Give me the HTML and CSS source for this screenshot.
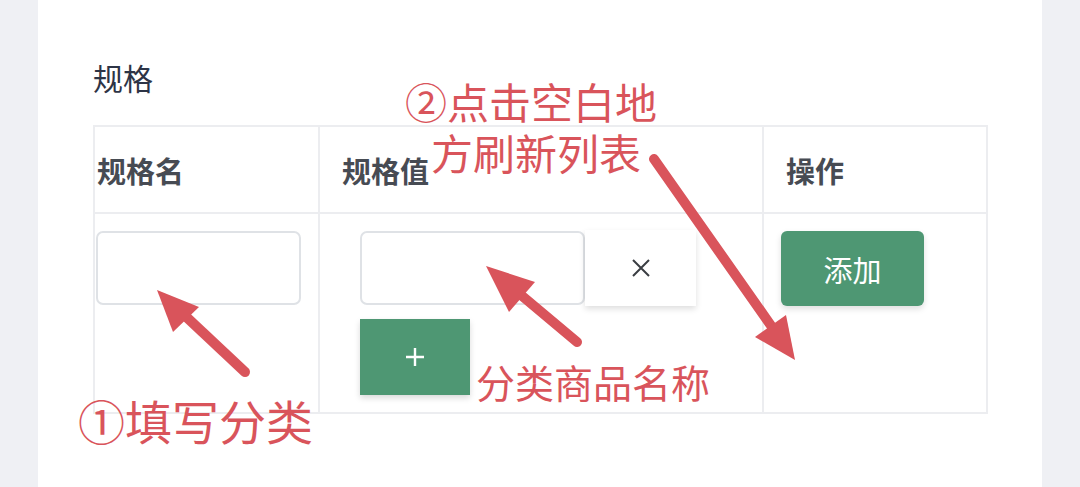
FILE: index.html
```html
<!DOCTYPE html>
<html lang="zh-CN">
<head>
    <meta charset="UTF-8">
    <meta name="viewport" content="width=device-width, initial-scale=1.0">
    <title>规格</title>
    <link rel="stylesheet" href="styles.css">
</head>
<body>
    <div class="page">
        <div class="card">
            <div class="title">规格</div>
            <table class="spec-table">
                <colgroup>
                    <col class="col-name">
                    <col class="col-value">
                    <col class="col-op">
                </colgroup>
                <thead>
                    <tr>
                        <th class="th-name">规格名</th>
                        <th class="th-value">规格值</th>
                        <th class="th-op">操作</th>
                    </tr>
                </thead>
                <tbody>
                    <tr>
                        <td class="td-name">
                            <input type="text" class="field field-name">
                        </td>
                        <td class="td-value">
                            <div class="value-row">
                                <input type="text" class="field field-value">
                                <button class="btn-close" type="button">
                                    <svg width="20" height="20" viewBox="0 0 20 20">
                                        <path d="M2 2 L18 18 M18 2 L2 18" stroke="#3a3d42" stroke-width="2" fill="none"/>
                                    </svg>
                                </button>
                            </div>
                            <button class="btn-plus" type="button">
                                <svg width="20" height="20" viewBox="0 0 20 20">
                                    <path d="M10 1 V19 M1 10 H19" stroke="#fff" stroke-width="2.4" fill="none"/>
                                </svg>
                            </button>
                        </td>
                        <td class="td-op">
                            <button class="btn-add" type="button">添加</button>
                        </td>
                    </tr>
                </tbody>
            </table>
        </div>

        <!-- 标注层 -->
        <svg class="marks" width="1080" height="487" viewBox="0 0 1080 487">
            <g stroke="#d9545b" stroke-width="10" stroke-linecap="round" fill="none">
                <line x1="245" y1="372" x2="180" y2="311"/>
                <line x1="577" y1="342" x2="515" y2="290"/>
                <line x1="654" y1="159" x2="772" y2="327"/>
            </g>
            <g fill="#d9545b">
                <polygon points="157,290 199,307 173,332"/>
                <polygon points="486,266 535,282 509,312"/>
                <polygon points="795,360 786,315 755,337"/>
            </g>
        </svg>
        <div class="note note-2a">②点击空白地</div>
        <div class="note note-2b">方刷新列表</div>
        <div class="note note-name">分类商品名称</div>
        <div class="note note-1">①填写分类</div>
    </div>
</body>
</html>
```

FILE: styles.css
```css
body {
    margin: 0;
    padding: 0;
    background-color: #eff0f4;
    font-family: "Noto Sans CJK SC", "Noto Sans", sans-serif;
}
.page {
    position: relative;
    width: 1080px;
    height: 487px;
    overflow: hidden;
}
.card {
    margin-left: 38px;
    width: 1004px;
    height: 487px;
    background: #fff;
    box-sizing: border-box;
    padding: 57px 0 0 55px;
}
.title {
    font-size: 30px;
    line-height: 40px;
    color: #2d3446;
    height: 68px;
}
.spec-table {
    border-collapse: collapse;
    table-layout: fixed;
    width: 895px;
}
.col-name { width: 225px; }
.col-value { width: 444px; }
.col-op { width: 224px; }
.spec-table th,
.spec-table td {
    border: 2px solid #ecedf0;
    vertical-align: top;
}
.spec-table th {
    height: 87px;
    box-sizing: border-box;
    padding: 0;
    text-align: left;
    font-size: 29px;
    font-weight: bold;
    color: #474b53;
    vertical-align: middle;
}
.th-name { padding-left: 2px !important; }
.th-value { padding-left: 22px !important; }
.th-op { padding-left: 22px !important; }
.spec-table td {
    height: 200px;
    box-sizing: border-box;
    padding: 17px 0 0 0;
}
.td-name { padding-left: 1px !important; }
.td-value { padding-left: 40px !important; }
.td-op { padding-left: 17px !important; }
.field {
    display: block;
    height: 74px;
    box-sizing: border-box;
    border: 2px solid #dfe2e6;
    border-radius: 7px;
    background: #fff;
    outline: none;
}
.field-name { width: 205px; }
.field-value { width: 225px; }
.value-row {
    display: flex;
    align-items: flex-start;
}
.btn-close {
    width: 111px;
    height: 76px;
    margin-top: -1px;
    border: none;
    background: #fff;
    box-shadow: 0 3px 6px rgba(0, 0, 0, 0.13);
    display: flex;
    align-items: center;
    justify-content: center;
    padding: 0;
}
.btn-plus {
    margin-top: 13px;
    width: 110px;
    height: 76px;
    border: none;
    background: #4e9773;
    box-shadow: 0 3px 6px rgba(0, 0, 0, 0.15);
    display: flex;
    align-items: center;
    justify-content: center;
    padding: 0;
}
.btn-add {
    width: 143px;
    height: 75px;
    border: none;
    border-radius: 6px;
    background: #4e9773;
    box-shadow: 0 3px 6px rgba(0, 0, 0, 0.13);
    color: #fff;
    font-family: "Noto Sans CJK SC", sans-serif;
    font-size: 29px;
    padding: 0;
}
.marks {
    position: absolute;
    left: 0;
    top: 0;
}
.note {
    position: absolute;
    color: #d9545b;
    line-height: 1;
    white-space: nowrap;
}
.note-2a {
    left: 405px;
    top: 80px;
    font-size: 42px;
}
.note-2b {
    left: 431px;
    top: 131px;
    font-size: 42px;
}
.note-name {
    left: 476px;
    top: 362px;
    font-size: 39px;
}
.note-1 {
    left: 78px;
    top: 396px;
    font-size: 47px;
}
```
